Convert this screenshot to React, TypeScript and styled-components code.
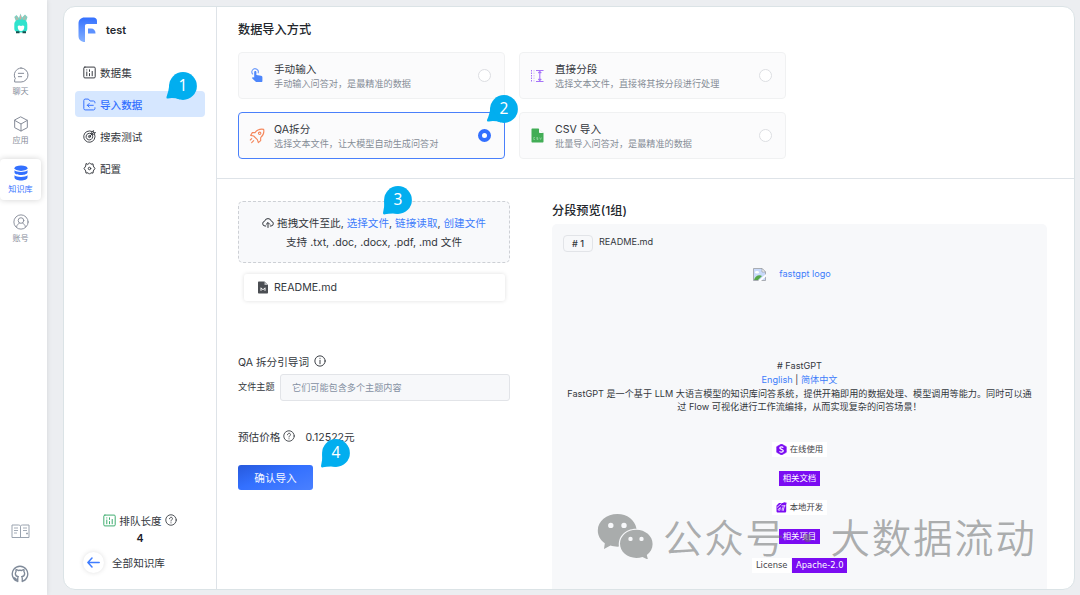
import React from 'react';
import styled, { createGlobalStyle, css } from 'styled-components';

const Global = createGlobalStyle`
  * { box-sizing: border-box; }
  body {
    margin: 0;
    background: #eceef1;
    font-family: Inter, "Noto Sans CJK SC", sans-serif;
    font-size: 10.6px;
    color: #33373d;
    overflow: hidden;
  }
`;

const blue = '#3370ff';

const Page = styled.div`
  position: relative;
  display: flex;
  width: 1080px;
  height: 595px;
  overflow: hidden;
`;

/* ---------- left rail ---------- */
const Rail = styled.nav`
  width: 47px;
  flex: none;
  background: #fff;
  box-shadow: 0 0 5px rgba(0, 0, 0, 0.1);
  display: flex;
  flex-direction: column;
  padding: 13px 6px 12px 0;
`;
const Avatar = styled.div`
  height: 48px;
  padding-left: 13px;
`;
const RailItem = styled.div<{ $active?: boolean }>`
  width: 41px;
  height: 41px;
  margin-bottom: 8px;
  padding-top: 6px;
  border-radius: 4px;
  display: flex;
  flex-direction: column;
  align-items: center;
  font-size: 8.1px;
  line-height: 12px;
  color: #858b98;
  svg { margin-bottom: 2px; }
  ${p => p.$active && css`
    color: ${blue};
    background: #fff;
    box-shadow: 0 0 6px rgba(0, 0, 0, 0.18);
  `}
`;
const RailBottom = styled.div`
  margin-top: auto;
  padding-right: 1px;
  display: flex;
  flex-direction: column;
  align-items: center;
  gap: 26px;
  color: #7f8a99;
  svg { display: block; }
`;

/* ---------- main panel ---------- */
const Panel = styled.div`
  margin: 6px 5px 5px 16px;
  flex: 1;
  display: flex;
  background: #fff;
  border: 1px solid #dbe3e6;
  border-radius: 12px;
  overflow: hidden;
`;
const Side = styled.aside`
  width: 153px;
  flex: none;
  border-right: 1px solid #dee3e8;
  padding: 11px 11px 16px 11px;
  display: flex;
  flex-direction: column;
`;
const Brand = styled.div`
  display: flex;
  align-items: center;
  height: 24px;
  padding-left: 3px;
  gap: 8px;
  font-weight: 600;
  font-size: 10.9px;
  color: #23272e;
  margin-bottom: 17px;
`;
const MenuItem = styled.div<{ $active?: boolean }>`
  height: 26px;
  width: 130px;
  margin-bottom: 6px;
  padding-left: 8px;
  border-radius: 4px;
  display: flex;
  align-items: center;
  gap: 4px;
  color: ${p => (p.$active ? blue : '#33373d')};
  font-weight: ${p => (p.$active ? 500 : 400)};
  background: ${p => (p.$active ? '#d6e7ff' : 'transparent')};
`;
const SideFoot = styled.div`
  margin-top: auto;
  display: flex;
  flex-direction: column;
`;
const Queue = styled.div`
  display: flex;
  align-items: center;
  justify-content: center;
  gap: 3px;
  height: 18px;
`;
const QueueCount = styled.div`
  text-align: center;
  font-weight: 600;
  color: #1d2129;
  height: 20px;
  line-height: 20px;
`;
const Back = styled.div`
  display: flex;
  align-items: center;
  gap: 8px;
  padding-left: 8px;
  margin-top: 3px;
`;
const RoundButton = styled.span`
  width: 21px;
  height: 21px;
  border-radius: 50%;
  display: flex;
  align-items: center;
  justify-content: center;
  box-shadow: 0 0 5px rgba(0, 0, 0, 0.13);
`;

const Main = styled.main`
  flex: 1;
  min-width: 0;
  display: flex;
  flex-direction: column;
`;
const Modes = styled.section`
  height: 172px;
  flex: none;
  border-bottom: 1px solid #dee3e8;
  padding: 14px 21px 0;
`;
const Heading = styled.h2`
  margin: 0;
  font-size: 12.2px;
  line-height: 18px;
  font-weight: 500;
  color: #22262c;
`;
const CardGrid = styled.div`
  margin-top: 13px;
  display: grid;
  grid-template-columns: 267px 267px;
  grid-auto-rows: 47px;
  gap: 13px 14px;
`;
const ModeCard = styled.div<{ $active?: boolean }>`
  display: flex;
  align-items: center;
  border: 1px solid ${p => (p.$active ? '#4a80fb' : '#f0f1f2')};
  border-radius: 4px;
  background: #fbfbfc;
  padding: 0 13px 0 10px;
`;
const ModeIcon = styled.span`
  width: 15px;
  flex: none;
  display: flex;
  justify-content: center;
  svg { flex: none; }
`;
const ModeText = styled.div`
  flex: 1;
  margin-left: 10px;
  line-height: 15px;
  small {
    display: block;
    font-size: 9.13px;
    line-height: 13px;
    color: #868d97;
  }
`;
const Radio = styled.span<{ $on?: boolean }>`
  width: 13px;
  height: 13px;
  border-radius: 50%;
  background: #fff;
  border: ${p => (p.$on ? `4px solid ${blue}` : '1.5px solid #dcdee2')};
`;

const Work = styled.section`
  flex: 1;
  min-height: 0;
  display: flex;
`;
const FormColumn = styled.div`
  width: 272px;
  margin: 22px 0 0 21px;
  flex: none;
`;
const DropZone = styled.div`
  height: 62px;
  border: 1px dashed #cdd0d5;
  border-radius: 5px;
  background: #f8f9fb;
  padding-top: 12px;
  text-align: center;
  line-height: 19px;
  white-space: nowrap;
  svg { vertical-align: -2px; margin-right: 3px; }
`;
const Link = styled.span`
  color: #3e7dfb;
`;
const FileRow = styled.div`
  height: 27px;
  margin: 11px 5px 0 6px;
  border-radius: 3px;
  box-shadow: 0 0 4px rgba(0, 0, 0, 0.13);
  display: flex;
  align-items: center;
  gap: 6px;
  padding-left: 14px;
`;
const PromptLabel = styled.div`
  margin-top: 52px;
  height: 16px;
  display: flex;
  align-items: center;
  gap: 5px;
`;
const TopicRow = styled.div`
  display: flex;
  align-items: center;
  margin-top: 5px;
  font-size: 9.13px;
  line-height: 13px;
  white-space: nowrap;
`;
const TopicName = styled.span`
  padding-bottom: 2px;
`;
const TopicInput = styled.div`
  margin-left: auto;
  width: 230px;
  height: 27px;
  border: 1px solid #e2e4e8;
  border-radius: 3px;
  background: #f7f8fa;
  color: #8590a2;
  padding-left: 11px;
  line-height: 25px;
`;
const PriceRow = styled.div`
  display: flex;
  align-items: center;
  height: 16px;
  margin-top: 27px;
  svg { margin: 0 10px 0 3px; }
`;
const Submit = styled.button`
  display: block;
  margin-top: 21px;
  width: 75px;
  height: 25px;
  padding: 0 0 1px;
  border: 0;
  border-radius: 3px;
  background: linear-gradient(160deg, #2759dc 0%, #3370ff 45%, #4a80ff 100%);
  color: #f4f7ff;
  font: inherit;
`;

const Preview = styled.div`
  margin: 22px 27px 0 42px;
  flex: 1;
  min-width: 0;
  display: flex;
  flex-direction: column;
`;
const PreviewTitle = styled(Heading)`
  padding-top: 1px;
  line-height: 17px;
`;
const Chunk = styled.article`
  margin-top: 5px;
  flex: 1;
  background: #f7f8fa;
  border-radius: 5px 5px 0 0;
  padding: 10px 11px 0;
  font-size: 9.15px;
  line-height: 13.8px;
  text-align: center;
  white-space: nowrap;
`;
const ChunkHead = styled.div`
  display: flex;
  gap: 6px;
  line-height: 15px;
`;
const ChunkTag = styled.span`
  width: 30px;
  height: 17px;
  border: 1px solid #e2e4e8;
  border-radius: 4px;
  margin-top: 1px;
  font-weight: 500;
`;
const LogoLine = styled.div`
  display: flex;
  align-items: center;
  justify-content: center;
  gap: 13px;
  margin-top: 15px;
  height: 14px;
  padding-right: 15px;
`;
const Intro = styled.div`
  margin-top: 78px;
`;
const Badges = styled.div`
  margin-top: 28px;
  display: flex;
  flex-direction: column;
  align-items: center;
  gap: 14px;
  font-family: "DejaVu Sans", "Noto Sans CJK SC", sans-serif;
  font-size: 8.4px;
  line-height: 15px;
`;
const BadgeRow = styled.div`
  display: flex;
  height: 15px;
  gap: 1px;
`;
const Badge = styled.span<{ $solid?: boolean }>`
  display: flex;
  align-items: center;
  gap: 3px;
  padding: 0 ${p => (p.$solid ? 3.5 : 4)}px;
  color: ${p => (p.$solid ? '#fff' : '#3f4248')};
  background: ${p => (p.$solid ? '#7b0cf2' : '#fff')};
`;

/* ---------- overlays ---------- */
const Pin = styled.div<{ $x: number; $y: number }>`
  position: absolute;
  left: ${p => p.$x - 20}px;
  top: ${p => p.$y - 20}px;
  width: 40px;
  height: 40px;
  line-height: 39px;
  text-align: center;
  color: #fff;
  font-family: "Noto Sans", sans-serif;
  font-size: 15.5px;
  svg { position: absolute; left: 0; top: 0; }
  span { position: relative; }
`;
const Watermark = styled.div`
  position: absolute;
  left: 597px;
  top: 505px;
  display: flex;
  align-items: center;
  height: 60px;
  font-family: "Noto Sans CJK SC", sans-serif;
  font-weight: 350;
  font-size: 39.6px;
  letter-spacing: 1.6px;
  color: rgba(104, 107, 107, 0.55);
  white-space: nowrap;
  svg { margin: 2px 10px 0 0; }
`;
const Dot = styled.span`
  width: 44px;
  text-align: center;
`;

type IconProps = { size?: number; color?: string };
const Line = ({ size = 13, color = 'currentColor', w = 1.5, children }: IconProps & { w?: number; children: React.ReactNode }) => (
  <svg width={size} height={size} viewBox="0 0 24 24" fill="none" stroke={color} strokeWidth={w} strokeLinecap="round" strokeLinejoin="round">
    {children}
  </svg>
);

const RabbitIcon = () => (
  <svg width="16" height="21" viewBox="0 0 16 21">
    <path d="M3 8.500 1.300 4 3.500 2l2.500 3L7.500.5l1.500 4L12 1.500l2.500 2.500L13 8.500z" fill="#7fcfc0" />
    <path d="M4.500 7 3.500 4M7.500 7V2.500M10.500 7l1.500-3.500" stroke="#dba49b" strokeWidth="0.900" />
    <path d="M1.300 11.500C1.300 7.500 4.500 6.500 8 6.500s6.300 1 6.300 5v4c0 3-2 4-6.300 4s-6.700-1-6.700-4z" fill="#2fe3cd" />
    <path d="M4.700 13.500c.8-1.600 2.300-1.200 3.300-.5 1-.7 2.500-1.100 3.300.5 0 2.500-1 4.500-3.300 4.500s-3.300-2-3.300-4.500z" fill="#fff" />
    <path d="M3 18.300h3.500v1.900H3zM9.500 18.300H13v1.900H9.500z" fill="#174f4d" />
  </svg>
);
const ChatIcon = () => (
  <Line size={16}><path d="M12 1.500A10.500 10.500 0 1 1 12 22.500H2.500V19l1-1.500A10.500 10.500 0 0 1 12 1.500zM8 9.500h8M8 14.500h5" /></Line>
);
const CubeIcon = () => (
  <Line size={16}><path d="m12 1.500 9.500 5v11L12 22.500l-9.500-5v-11zM2.500 6.500 12 12l9.500-5.500M12 12v10.500" /></Line>
);
const DatabaseIcon = () => (
  <svg width="16" height="16" viewBox="0 0 16 16" fill={blue}>
    <ellipse cx="8" cy="3.200" rx="6.500" ry="2.700" />
    <path d="M1.500 5.200c2 2.300 11 2.300 13 0v2c0 3.700-13 3.700-13 0zM1.500 10.200c2 2.300 11 2.300 13 0v2.300c0 3.900-13 3.900-13 0z" />
  </svg>
);
const UserIcon = () => (
  <Line size={16} w={1.400}><circle cx="12" cy="12" r="10.700" /><circle cx="12" cy="9.800" r="4.200" /><path d="M5.500 18.800c.5-2.800 2.300-4 4-5M18.500 18.800c-.5-2.800-2.300-4-4-5" /></Line>
);
const BookIcon = () => (
  <svg width="19" height="15" viewBox="0 0 19 15" fill="none" stroke="#9aa3af" strokeWidth="1">
    <path d="M1 1h6.500c1 0 2 .5 2 1.500 0-1 1-1.500 2-1.500H18v12.500H1zM9.500 2.500v11" />
    <path d="M3 4h4M3 6.500h4M3 9h3M12 4h4M12 6.500h4M15 9.500h2M16 8.500v2" strokeWidth="0.900" />
  </svg>
);
const GithubIcon = () => (
  <Line size={18} w={1.800}><path d="M9 21.800A10.300 10.300 0 1 1 15 21.800M9 22v-4.500c0-1 .3-1.500.8-2-2.500-.5-4-1.500-4-4 0-1.300.4-2 1-2.700-.3-1-.2-2 .1-2.600 1.200 0 2 .5 2.800 1.100 1.500-.4 3-.4 4.600 0 .8-.6 1.600-1.100 2.800-1.100.3.600.4 1.600.1 2.600.6.700 1 1.400 1 2.700 0 2.500-1.500 3.500-4 4 .5.500.8 1 .8 2V22M9 19c-2 .4-3-.5-4-2" /></Line>
);
const BrandIcon = () => (
  <svg width="20" height="26" viewBox="0 0 20 26">
    <defs>
      <linearGradient id="brand" x1="0" y1="0" x2="0" y2="1">
        <stop offset="0" stopColor="#3370ff" /><stop offset="1" stopColor="#85b1ff" />
      </linearGradient>
    </defs>
    <path d="M6.500 0.500h9c2 0 3.500 1.500 3.500 3.500v3H9c-1.500 0-2 .7-2 2v16C3 25 .5 22.500.5 19V6.500c0-3.500 2.500-6 6-6z" fill="url(#brand)" />
    <path d="M10 11.500h3c3 0 4.500 2 4.500 5H10z" fill="#5c91ff" />
  </svg>
);
const DatasetIcon = ({ size, color }: IconProps) => (
  <Line size={size} color={color} w={1.800}><rect x="1.500" y="2" width="21" height="20" rx="2" /><path d="M7 7v.5M7 11v7M12 7v3M12 14v4M17 10v8" /></Line>
);
const ImportIcon = () => (
  <Line w={1.800}><path d="M22 9V8c0-1.500-1-2.500-2.500-2.500H13L10 2H4C2.500 2 1.500 3 1.500 4.500v15C1.500 21 2.500 22 4 22h15.500c1.500 0 2.500-1 2.500-2.500V18M19 13.500H8M11.500 10 8 13.500l3.500 3.500" /></Line>
);
const TargetIcon = () => (
  <Line w={1.700}><path d="M16.500 2.700A10.500 10.500 0 1 0 21.500 8M14.500 6.500A6.200 6.200 0 1 0 17.700 10" /><circle cx="12" cy="12" r="2" /><path d="m12 12 7-7V1.500M19 5h3.500M15.500 8.500V5L19 1.500M15.500 8.500H19L22.500 5" /></Line>
);
const GearIcon = () => (
  <Line w={1.800}><path d="M9.500 4 12 1.500 14.500 4l4-.5.5 4 3 4.500-3 4.500-.5 4-4-.5L12 22.500 9.500 20l-4 .5-.5-4L2 12l3-4.500.5-4z" /><circle cx="12" cy="12" r="2.300" /></Line>
);
const HelpIcon = () => (
  <Line size={12} w={1.700}><circle cx="12" cy="12" r="10.500" /><path d="M9 9.500c0-4 6-4 6-.3 0 2.200-3 2.300-3 4.800M12 17.500v.3" /></Line>
);
const InfoIcon = () => (
  <Line size={12} w={1.900}><circle cx="12" cy="12" r="10.300" /><path d="M12 10.500V17.500M12 6.500v.3" /></Line>
);
const TapIcon = () => (
  <svg width="12" height="15" viewBox="0 0 12 15">
    <path d="M2 6.300A3.200 3.200 0 1 1 7 5.300" fill="none" stroke="#6d9bfb" strokeWidth="1.100" />
    <path d="M3.200 4c0-1.500 2.200-1.500 2.200 0v3l4.600.8c.9.200 1.400.8 1.400 1.700v3.500c0 .6-.4 1-1 1H5L1.300 10.500c-.6-.8.1-1.400.9-1.200l1 .3z" fill="#4d86fb" />
  </svg>
);
const RocketIcon = () => (
  <Line size={16} color="#f5885d" w={1.700}><path d="M22 2c-6-1-10 1-13 5H5L2.500 11l4.500 1 5.500 5.500L14 22l3.500-3v-4.500C21.500 11 23 7 22 2z" /><circle cx="16" cy="8" r="1.800" /><path d="M4 16l-2 2M7 19l-3 3" /></Line>
);
const SplitIcon = () => (
  <svg width="15" height="14" viewBox="0 0 15 14" fill="none" stroke="#a673f8">
    <path d="M1.500 1v12" strokeDasharray="1.500 1" strokeWidth="1" />
    <path d="M4 1v12" strokeDasharray="1.500 1" strokeWidth="0.700" opacity=".6" />
    <path d="M6 1.500h7.500M6 12.500h7.500M9.800 2v10M8.300 4l1.500-1.500L11.300 4M8.300 10l1.500 1.500 1.500-1.500" strokeWidth="1.100" />
  </svg>
);
const CsvIcon = () => (
  <svg width="15" height="15" viewBox="0 0 15 15">
    <path d="M2.500.5h6l5 4.500v8.500c0 .6-.4 1-1 1h-10c-.6 0-1-.4-1-1v-12c0-.6.4-1 1-1z" fill="#42ad56" />
    <path d="M9 .5V4c0 .6.4 1 1 1h3.500z" fill="#fbfbfc" />
    <path d="M5 9.500H3.700v2H5M8 9.500H6.700v1H8v1H6.700M9.700 9.500l.9 2 .9-2" fill="none" stroke="#a5dbae" strokeWidth=".6" />
  </svg>
);
const CloudIcon = () => (
  <Line size={12} w={2}><path d="M7.500 18H6a4.800 4.800 0 0 1-.8-9.500 7 7 0 0 1 13.600 0A4.800 4.800 0 0 1 18 18h-1.500M12 21v-9M8.500 14.500 12 11l3.500 3.500" /></Line>
);
const FileIcon = () => (
  <svg width="10" height="13" viewBox="0 0 10 13">
    <path d="M1 .5h5.500L10 4v7.500c0 .6-.4 1-1 1H1c-.6 0-1-.4-1-1v-10c0-.6.400-1 1-1z" fill="#4b4e53" />
    <path d="M6.500.5V4H10" fill="#b9bbbe" />
    <path d="M3 9.800V6.800L5 8.800l2-2v3" fill="none" stroke="#fff" strokeWidth="1" />
  </svg>
);
const BrokenImage = () => (
  <svg width="13" height="13" viewBox="0 0 13 13">
    <path d="M.5.5h8.500l3.500 3.500v8.500H.5z" fill="#c9dafa" stroke="#9a9da1" strokeWidth=".8" />
    <path d="M9 .5V4h3.500z" fill="#fff" stroke="#9a9da1" strokeWidth=".7" />
    <ellipse cx="4" cy="4.300" rx="2" ry="1.200" fill="#fff" />
    <path d="M1 12c1-4 5-6 8-4l-4 4z" fill="#55a748" />
    <path d="m5 13 8-7v2.500L8 13z" fill="#fff" />
  </svg>
);
const CoinIcon = () => (
  <svg width="11" height="11" viewBox="0 0 11 11">
    <path d="M5.500 0 10.300 2.700v5.600L5.500 11 .7 8.300V2.700z" fill="#7b0cf2" stroke="#7b0cf2" strokeLinejoin="round" strokeWidth=".6" />
    <path d="M7.300 3.600C6.400 2.600 3.800 2.700 3.800 4.100s3.500 1.200 3.500 2.700-2.700 1.800-3.800.6" fill="none" stroke="#fff" strokeWidth="1.200" />
  </svg>
);
const DevIcon = () => (
  <svg width="11" height="11" viewBox="0 0 11 11">
    <path d="M3 1h4l1-.7 2.700.5-.5 1.700v6.500c0 1-.6 1.500-1.500 1.500H2C1 10.500.5 10 .5 9V3.500z" fill="#7b0cf2" />
    <path d="M1 5.500 5.500 1.500M4.300 5.200 3.800 8.500M4 6.500c-2-.3-2.300 2-.7 2M6.500 5.500 6 8.500M8.500 3.500 7 9M5.500 3.800h4" fill="none" stroke="#fff" strokeWidth=".8" />
  </svg>
);
const ArrowIcon = () => (
  <svg width="13" height="11" viewBox="0 0 13 11" fill="none" stroke="#3f7dff" strokeWidth="1.500" strokeLinecap="round" strokeLinejoin="round">
    <path d="M12.200 5.500H1M5 1 .9 5.500 5 10" />
  </svg>
);
const WechatIcon = () => (
  <svg width="56" height="46" viewBox="0 0 56 46">
    <path fillRule="evenodd" fill="#a9acac" d="M20.500 1C9.500 1 .800 8.200.800 17.500c0 5.200 2.700 9.700 7 12.700L7 36l6.500-3.500c2.500.8 5.300 1.300 8.500 1.100C20.500 24 28 15.500 39.500 15.700 38 7 30 1 20.500 1zM13.800 9.700a2.700 2.700 0 1 0 0 5.400 2.700 2.700 0 0 0 0-5.400zM27 9.700a2.700 2.700 0 1 0 0 5.400 2.700 2.700 0 0 0 0-5.400z" />
    <path fillRule="evenodd" fill="#a9acac" d="M39.300 16.800c-9 0-16.300 6.200-16.300 14 0 7.900 7.300 14.100 16.300 14.100 2.200 0 4.300-.4 6.200-1l5.500 2.800-1.200-4.800c3.600-2.600 5.800-6.600 5.800-11 0-7.900-7.300-14.100-16.300-14.100zM33.500 23.700a2.200 2.200 0 1 0 0 4.400 2.200 2.200 0 0 0 0-4.400zM44.500 23.700a2.200 2.200 0 1 0 0 4.400 2.200 2.200 0 0 0 0-4.400z" />
  </svg>
);

const pins = [
  { n: 1, x: 183, y: 86, tail: 'M6.500 18 Q5.500 26 3.500 31 Q3 33 5 32.500 Q10 31.300 17 33.500z' },
  { n: 2, x: 504, y: 109, tail: 'M6.500 18 Q5.500 26 3 31 Q2.500 33 5 32.500 Q10 31.300 17 33.500z' },
  { n: 3, x: 398, y: 200, tail: 'M6.300 20 Q6.500 27 5 33 Q5 35 7 34.300 Q12 33 20 33.700z' },
  { n: 4, x: 336, y: 452.500, tail: 'M6.300 20 Q6.500 27 5 33 Q5 35 7 34.300 Q12 33 20 33.700z' },
];

const modes = [
  { title: '手动输入', desc: '手动输入问答对，是最精准的数据', icon: <TapIcon /> },
  { title: '直接分段', desc: '选择文本文件，直接将其按分段进行处理', icon: <SplitIcon /> },
  { title: 'QA拆分', desc: '选择文本文件，让大模型自动生成问答对', icon: <RocketIcon />, active: true },
  { title: 'CSV 导入', desc: '批量导入问答对，是最精准的数据', icon: <CsvIcon /> },
];

export default function App() {
  return (
    <>
      <Global />
      <Page>
        <Rail>
          <Avatar><RabbitIcon /></Avatar>
          <RailItem><ChatIcon />聊天</RailItem>
          <RailItem><CubeIcon />应用</RailItem>
          <RailItem $active><DatabaseIcon />知识库</RailItem>
          <RailItem><UserIcon />账号</RailItem>
          <RailBottom><BookIcon /><GithubIcon /></RailBottom>
        </Rail>
        <Panel>
          <Side>
            <Brand><BrandIcon />test</Brand>
            <MenuItem><DatasetIcon />数据集</MenuItem>
            <MenuItem $active><ImportIcon />导入数据</MenuItem>
            <MenuItem><TargetIcon />搜索测试</MenuItem>
            <MenuItem><GearIcon />配置</MenuItem>
            <SideFoot>
              <Queue><DatasetIcon size={13} color="#3bab6c" />排队长度<HelpIcon /></Queue>
              <QueueCount>4</QueueCount>
              <Back><RoundButton><ArrowIcon /></RoundButton>全部知识库</Back>
            </SideFoot>
          </Side>
          <Main>
            <Modes>
              <Heading>数据导入方式</Heading>
              <CardGrid>
                {modes.map(m => (
                  <ModeCard key={m.title} $active={m.active}>
                    <ModeIcon>{m.icon}</ModeIcon>
                    <ModeText>{m.title}<small>{m.desc}</small></ModeText>
                    <Radio $on={m.active} />
                  </ModeCard>
                ))}
              </CardGrid>
            </Modes>
            <Work>
              <FormColumn>
                <DropZone>
                  <div><CloudIcon />拖拽文件至此, <Link>选择文件</Link>, <Link>链接读取</Link>, <Link>创建文件</Link></div>
                  <div>支持 .txt, .doc, .docx, .pdf, .md 文件</div>
                </DropZone>
                <FileRow><FileIcon />README.md</FileRow>
                <PromptLabel>QA 拆分引导词<InfoIcon /></PromptLabel>
                <TopicRow><TopicName>文件主题</TopicName><TopicInput>它们可能包含多个主题内容</TopicInput></TopicRow>
                <PriceRow>预估价格<HelpIcon />0.12522元</PriceRow>
                <Submit>确认导入</Submit>
              </FormColumn>
              <Preview>
                <PreviewTitle>分段预览(1组)</PreviewTitle>
                <Chunk>
                  <ChunkHead><ChunkTag># 1</ChunkTag>README.md</ChunkHead>
                  <LogoLine><BrokenImage /><Link>fastgpt logo</Link></LogoLine>
                  <Intro>
                    <div># FastGPT</div>
                    <div><Link>English</Link> | <Link>简体中文</Link></div>
                    <div>FastGPT 是一个基于 LLM 大语言模型的知识库问答系统，提供开箱即用的数据处理、模型调用等能力。同时可以通</div>
                    <div>过 Flow 可视化进行工作流编排，从而实现复杂的问答场景！</div>
                  </Intro>
                  <Badges>
                    <Badge><CoinIcon />在线使用</Badge>
                    <Badge $solid>相关文档</Badge>
                    <Badge><DevIcon />本地开发</Badge>
                    <Badge $solid>相关项目</Badge>
                    <BadgeRow><Badge>License</Badge><Badge $solid>Apache-2.0</Badge></BadgeRow>
                  </Badges>
                </Chunk>
              </Preview>
            </Work>
          </Main>
        </Panel>
        {pins.map(p => (
          <Pin key={p.n} $x={p.x} $y={p.y}>
            <svg width="40" height="40" viewBox="0 0 40 40" fill="#02aeef">
              <circle cx="20" cy="20" r="13.900" />
              <path d={p.tail} />
            </svg>
            <span>{p.n}</span>
          </Pin>
        ))}
        <Watermark><WechatIcon />公众号<Dot>·</Dot>大数据流动</Watermark>
      </Page>
    </>
  );
}
